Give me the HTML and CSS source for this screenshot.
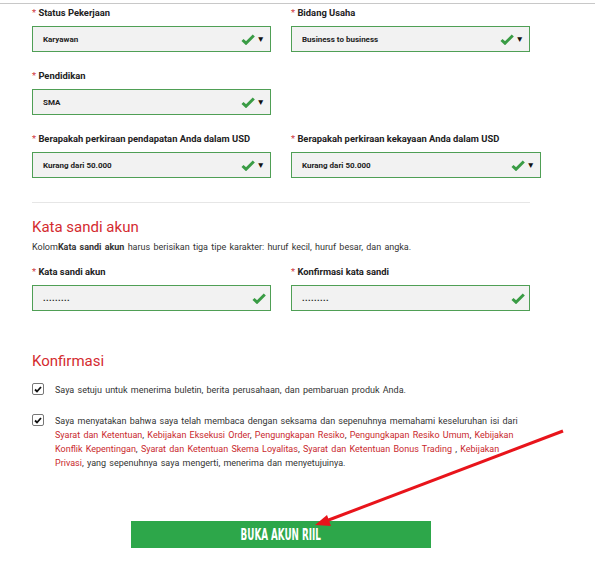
FILE: index.html
```html
<!DOCTYPE html>
<html lang="en">
<head>
    <meta charset="UTF-8">
    <meta name="viewport" content="width=device-width, initial-scale=1.0">
    <title>Buka Akun Riil</title>
    <link rel="stylesheet" href="styles.css">
</head>
<body>

<div class="topline"></div>

<div class="form">
    <!-- Data pekerjaan -->
    <div class="grid">
        <div class="field">
            <label><span class="req">*</span> Status Pekerjaan</label>
            <div class="select">
                <span class="val">Karyawan</span>
                <svg class="ok" width="14" height="11" viewBox="0 0 14 11"><path d="M1.5 6 L5 9.2 L12.8 1.5" fill="none" stroke="#3a9c45" stroke-width="3"/></svg>
                <span class="caret">&#9660;</span>
            </div>
        </div>
        <div class="field">
            <label><span class="req">*</span> Bidang Usaha</label>
            <div class="select">
                <span class="val">Business to business</span>
                <svg class="ok" width="14" height="11" viewBox="0 0 14 11"><path d="M1.5 6 L5 9.2 L12.8 1.5" fill="none" stroke="#3a9c45" stroke-width="3"/></svg>
                <span class="caret">&#9660;</span>
            </div>
        </div>
        <div class="field">
            <label><span class="req">*</span> Pendidikan</label>
            <div class="select">
                <span class="val">SMA</span>
                <svg class="ok" width="14" height="11" viewBox="0 0 14 11"><path d="M1.5 6 L5 9.2 L12.8 1.5" fill="none" stroke="#3a9c45" stroke-width="3"/></svg>
                <span class="caret">&#9660;</span>
            </div>
        </div>
        <div class="field"></div>
        <div class="field">
            <label><span class="req">*</span> Berapakah perkiraan pendapatan Anda dalam USD</label>
            <div class="select">
                <span class="val">Kurang dari 50.000</span>
                <svg class="ok" width="14" height="11" viewBox="0 0 14 11"><path d="M1.5 6 L5 9.2 L12.8 1.5" fill="none" stroke="#3a9c45" stroke-width="3"/></svg>
                <span class="caret">&#9660;</span>
            </div>
        </div>
        <div class="field">
            <label><span class="req">*</span> Berapakah perkiraan kekayaan Anda dalam USD</label>
            <div class="select wide">
                <span class="val">Kurang dari 50.000</span>
                <svg class="ok" width="14" height="11" viewBox="0 0 14 11"><path d="M1.5 6 L5 9.2 L12.8 1.5" fill="none" stroke="#3a9c45" stroke-width="3"/></svg>
                <span class="caret">&#9660;</span>
            </div>
        </div>
    </div>

    <hr class="sep">

    <!-- Kata sandi -->
    <h2 class="section-title">Kata sandi akun</h2>
    <p class="hint">Kolom<b>Kata sandi akun</b> harus berisikan tiga tipe karakter: huruf kecil, huruf besar, dan angka.</p>

    <div class="grid">
        <div class="field">
            <label><span class="req">*</span> Kata sandi akun</label>
            <div class="select">
                <span class="val dots">.........</span>
                <svg class="ok pw" width="14" height="11" viewBox="0 0 14 11"><path d="M1.5 6 L5 9.2 L12.8 1.5" fill="none" stroke="#3a9c45" stroke-width="3"/></svg>
            </div>
        </div>
        <div class="field">
            <label><span class="req">*</span> Konfirmasi kata sandi</label>
            <div class="select">
                <span class="val dots">.........</span>
                <svg class="ok pw" width="14" height="11" viewBox="0 0 14 11"><path d="M1.5 6 L5 9.2 L12.8 1.5" fill="none" stroke="#3a9c45" stroke-width="3"/></svg>
            </div>
        </div>
    </div>

    <!-- Konfirmasi -->
    <h2 class="section-title konf">Konfirmasi</h2>

    <div class="check-row">
        <span class="box"><svg width="8" height="7" viewBox="0 0 8 7"><path d="M1 3.5 L3 5.5 L7 1" fill="none" stroke="#111" stroke-width="1.8"/></svg></span>
        <p>Saya setuju untuk menerima buletin, berita perusahaan, dan pembaruan produk Anda.</p>
    </div>
    <div class="check-row">
        <span class="box"><svg width="8" height="7" viewBox="0 0 8 7"><path d="M1 3.5 L3 5.5 L7 1" fill="none" stroke="#111" stroke-width="1.8"/></svg></span>
        <p>Saya menyatakan bahwa saya telah membaca dengan seksama dan sepenuhnya memahami keseluruhan isi dari <a>Syarat dan Ketentuan</a>, <a>Kebijakan Eksekusi Order</a>, <a>Pengungkapan Resiko</a>, <a>Pengungkapan Resiko Umum</a>, <a>Kebijakan</a> <a>Konflik Kepentingan</a>, <a>Syarat dan Ketentuan Skema Loyalitas</a>, <a>Syarat dan Ketentuan Bonus Trading</a> , <a>Kebijakan</a> <a>Privasi</a>, yang sepenuhnya saya mengerti, menerima dan menyetujuinya.</p>
    </div>

    <div class="submit-wrap">
        <button class="submit"><span>BUKA AKUN RIIL</span></button>
    </div>
</div>

<!-- panah penanda -->
<svg class="arrow" width="595" height="564" viewBox="0 0 595 564">
    <line x1="563" y1="431" x2="326" y2="521" stroke="#e8141b" stroke-width="3"/>
    <polygon points="315,525 327,515 331,526" fill="#e8141b"/>
</svg>

</body>
</html>
```

FILE: styles.css
```css
body {
    margin: 0;
    font-family: Roboto, "Liberation Sans", Arial, sans-serif;
    color: #222;
    background: #fff;
}
.topline {
    margin-top: 3px;
    height: 1px;
    background: #c8c8c8;
}
.form {
    padding: 2px 0 0 32px;
    width: 499px;
}
.grid {
    display: grid;
    grid-template-columns: 239px 239px;
    column-gap: 20px;
    row-gap: 17px;
}
.field {
    display: flex;
    flex-direction: column;
}
.field label {
    font-size: 9.4px;
    font-weight: bold;
    line-height: 14px;
    margin-bottom: 6px;
    white-space: nowrap;
}
.req {
    color: #d0393e;
    font-weight: normal;
}
.select {
    height: 26px;
    box-sizing: border-box;
    border: 1px solid #4f9f55;
    background: #f2f2f2;
    display: flex;
    align-items: center;
    padding: 0 5px 0 10px;
}
.select.wide {
    width: 250px;
}
.val {
    flex: 1;
    font-size: 8px;
    font-weight: bold;
}
.dots {
    font-size: 9px;
    letter-spacing: 0.4px;
}
.ok {
    margin-right: 2px;
}
.ok.pw {
    margin-right: -1px;
}
.caret {
    font-size: 8.5px;
    color: #111;
}
.sep {
    border: 0;
    border-top: 1px solid #e6e6e6;
    margin: 24px 0 0 0;
    width: 498px;
}
.section-title {
    color: #d42b30;
    font-size: 15px;
    font-weight: normal;
    margin: 14px 0 0 0;
    line-height: 20px;
}
.hint {
    font-size: 9px;
    word-spacing: 1px;
    color: #333;
    margin: 5px 0 13px 0;
}
.konf {
    margin-top: 40px;
    margin-bottom: 12px;
}
.check-row {
    display: flex;
    align-items: flex-start;
    margin-bottom: 17px;
}
.box {
    width: 12px;
    height: 12px;
    box-sizing: border-box;
    border: 1px solid #777;
    border-radius: 2px;
    display: flex;
    align-items: center;
    justify-content: center;
    margin: 0 11px 0 0;
    flex-shrink: 0;
}
.check-row p {
    margin: 0;
    font-size: 9px;
    word-spacing: 1px;
    line-height: 14px;
    color: #333;
    width: 474px;
}
.check-row a {
    color: #c9282d;
}
.submit-wrap {
    padding: 34px 0 0 99px;
}
.submit {
    width: 300px;
    height: 27px;
    border: 0;
    background: #2da74a;
    color: #fff;
    font-family: "DejaVu Sans Condensed", "Liberation Sans Narrow", sans-serif;
    font-weight: bold;
    font-size: 15px;
    padding: 0;
}
.submit span {
    display: inline-block;
    transform: scaleX(0.65);
}
.arrow {
    position: absolute;
    left: 0;
    top: 0;
    pointer-events: none;
}
```
